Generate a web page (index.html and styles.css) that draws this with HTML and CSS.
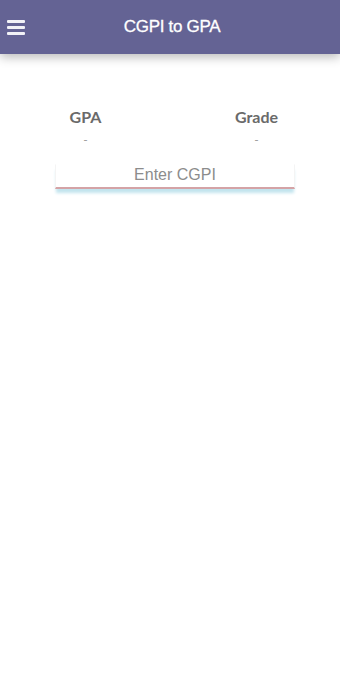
FILE: index.html
```html
<!DOCTYPE html>
<html>
<head>
<meta charset="utf-8">
<link rel="stylesheet" href="styles.css">
</head>
<body>
<header class="topbar">
  <button class="menu" aria-label="menu">
    <svg width="18" height="16" viewBox="0 0 18 16"><rect x="0" y="1" width="18" height="3" rx="1" fill="#f2f2f7"/><rect x="0" y="7" width="18" height="3" rx="1" fill="#f2f2f7"/><rect x="0" y="13" width="18" height="3" rx="1" fill="#f2f2f7"/></svg>
  </button>
  <h1 class="title">CGPI to GPA</h1>
</header>
<main class="content">
  <div class="results">
    <div class="result">
      <div class="label">GPA</div>
      <div class="value">-</div>
    </div>
    <div class="result">
      <div class="label">Grade</div>
      <div class="value">-</div>
    </div>
  </div>
  <div class="field">
    <input class="cgpi" type="text" placeholder="Enter CGPI">
  </div>
</main>
</body>
</html>
```
FILE: styles.css
```css
html, body {
  margin: 0;
  padding: 0;
  background: #ffffff;
}
body {
  width: 340px;
  height: 680px;
  font-family: "Liberation Sans", Arial, sans-serif;
}
.topbar {
  height: 54px;
  background: #646394;
  display: flex;
  align-items: center;
  justify-content: center;
  position: relative;
  box-shadow: 0 3px 10px rgba(0,0,0,0.28);
}
.menu {
  position: absolute;
  left: 7px;
  top: 19px;
  padding: 0;
  margin: 0;
  border: 0;
  background: none;
  width: 18px;
  height: 16px;
  display: block;
}
.menu svg { display: block; }
.title {
  margin: 0 0 0 4px;
  color: #ffffff;
  font-size: 17px;
  font-weight: normal;
  letter-spacing: -0.3px;
  -webkit-text-stroke: 0.3px #ffffff;
}
.content {
  padding-top: 53px;
  display: flex;
  flex-direction: column;
  align-items: center;
}
.results {
  width: 340px;
  display: flex;
}
.result {
  flex: 1;
  display: flex;
  flex-direction: column;
  align-items: center;
}
.result:first-child { padding-left: 2px; }
.result:last-child { padding-left: 4px; }
.label {
  font-family: Lato, "Liberation Sans", sans-serif;
  font-weight: bold;
  font-size: 16px;
  color: #6a6a6a;
  line-height: 20px;
}
.value {
  font-family: Lato, "Liberation Sans", sans-serif;
  font-size: 12px;
  color: #9a9a9a;
  line-height: 14px;
  margin-top: 6px;
}
.field {
  margin-top: 17px;
  width: 240px;
  margin-left: 10px;
}
.cgpi {
  width: 100%;
  box-sizing: border-box;
  border: 1px solid #f4f4f4;
  border-top-color: transparent;
  border-bottom: 2px solid #d4a3a6;
  box-shadow: 0 5px 3px -1px #c2e4ee;
  outline: none;
  background: transparent;
  font-family: "Liberation Sans", Arial, sans-serif;
  font-size: 16px;
  text-align: center;
  padding: 1px 0 3px;
  color: #666;
}
.cgpi::placeholder {
  color: #8c8c8c;
}
```
